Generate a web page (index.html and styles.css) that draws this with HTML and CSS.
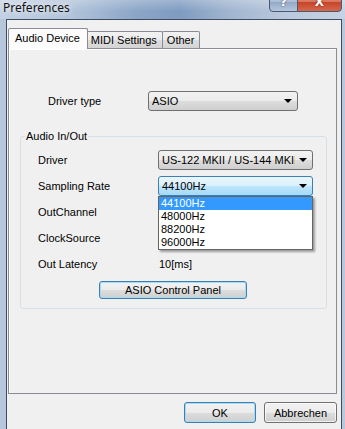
FILE: index.html
```html
<!DOCTYPE html>
<html>
<head>
<meta charset="utf-8">
<link rel="stylesheet" href="styles.css">
</head>
<body>
<div class="window">
  <div class="titlebar">
    <span class="title">Preferences</span>
    <div class="caption">
      <span class="cb help">?</span>
      <span class="cb close">X</span>
    </div>
  </div>
  <div class="client">
    <div class="tabs">
      <div class="tab active">Audio Device</div>
      <div class="tab">MIDI Settings</div>
      <div class="tab">Other</div>
    </div>
    <div class="pane">
      <div class="form-row top-row">
        <span class="label wide">Driver type</span>
        <div class="select w150"><span class="val">ASIO</span><span class="arrow"></span></div>
      </div>
      <fieldset class="group">
        <legend>Audio In/Out</legend>
        <div class="group-body">
          <div class="form-row">
            <span class="label">Driver</span>
            <div class="select w155"><span class="val">US-122 MKII / US-144 MKII</span><span class="arrow"></span></div>
          </div>
          <div class="form-row">
            <span class="label">Sampling Rate</span>
            <div class="select-wrap">
              <div class="select w155 focus"><span class="val">44100Hz</span><span class="arrow"></span></div>
              <ul class="dropdown">
                <li class="sel">44100Hz</li>
                <li>48000Hz</li>
                <li>88200Hz</li>
                <li>96000Hz</li>
              </ul>
            </div>
          </div>
          <div class="form-row"><span class="label">OutChannel</span></div>
          <div class="form-row"><span class="label">ClockSource</span></div>
          <div class="form-row"><span class="label">Out Latency</span><span class="value">10[ms]</span></div>
          <button class="btn default asio-btn">ASIO Control Panel</button>
        </div>
      </fieldset>
    </div>
    <div class="buttons">
      <button class="btn default ok">OK</button>
      <button class="btn cancel">Abbrechen</button>
    </div>
  </div>
</div>
</body>
</html>
```

FILE: styles.css
```css
* { box-sizing: border-box; }
html, body { margin: 0; padding: 0; }
body {
  width: 345px;
  height: 429px;
  overflow: hidden;
  font-family: "Liberation Sans", Arial, sans-serif;
  font-size: 11px;
  color: #000;
}
.window {
  width: 345px;
  height: 429px;
  display: flex;
  flex-direction: column;
  background: linear-gradient(90deg, #b7c8dd 0%, #a9bcd5 30%, #93abcb 50%, #a3b7d1 70%, #b8c8dd 100%);
}
.titlebar {
  height: 19px;
  flex: none;
  display: flex;
  justify-content: space-between;
  align-items: flex-start;
  padding: 0 3px 0 3px;
  background:
    linear-gradient(180deg, rgba(255,255,255,0.25), rgba(255,255,255,0) 60%),
    linear-gradient(90deg, #c3d1e3 0%, #b2c4da 20%, #8ba5c7 40%, #7f9bc0 52%, #9fb4cf 66%, #b9c8dc 82%, #c6d3e4 100%);
}
.title {
  font-family: "Noto Sans", "Open Sans", sans-serif;
  font-size: 12px;
  line-height: 15px;
  color: #111;
  text-shadow: 0 0 5px rgba(255,255,255,0.9), 0 0 8px rgba(255,255,255,0.6);
}
.caption {
  display: flex;
  margin-top: -8px;
}
.cb {
  height: 20px;
  display: flex;
  align-items: center;
  justify-content: center;
  color: #fff;
  font-family: "DejaVu Sans", sans-serif;
  font-weight: bold;
  font-size: 12px;
  border: 1px solid #4a5871;
}
.help {
  width: 29px;
  border-radius: 0 0 0 4px;
  background: linear-gradient(180deg, #c9d6e6, #aabcd4 50%, #93a9c6 51%, #b5c6dc);
  text-shadow: 0 0 2px #3a4a66;
}
.close {
  width: 45px;
  margin-left: -1px;
  border-radius: 0 0 4px 0;
  background: linear-gradient(180deg, #e8a493, #d7735b 50%, #c7432a 51%, #d4694c);
  text-shadow: 0 0 2px #6a1a0a;
}
.client {
  flex: 1;
  margin: 0 3px 0 6px;
  border: 1px solid #3f4d63;
  border-bottom: none;
  background: #f0f0f0;
  display: flex;
  flex-direction: column;
}
.tabs {
  height: 28px;
  flex: none;
  display: flex;
  align-items: flex-end;
  padding-left: 1px;
}
.tab {
  height: 17px;
  border: 1px solid #898c95;
  border-bottom: none;
  border-radius: 2px 2px 0 0;
  background: linear-gradient(180deg, #f2f2f2, #ebebeb 50%, #dddddd 51%, #d4d4d4);
  line-height: 16px;
  padding: 0 5px 0 4px;
  margin-left: -1px;
}
.tab.active {
  height: 21px;
  margin-left: 0;
  margin-right: -1px;
  margin-bottom: -1px;
  padding: 0 7px 0 6px;
  line-height: 18px;
  background: #fcfcfc;
  position: relative;
  z-index: 1;
}
.pane {
  margin-left: 1px;
  width: 329px;
  height: 346px;
  flex: none;
  border: 1px solid #898c95;
  background: #f0f0f0;
  box-shadow: inset 1px 1px 0 #fff;
}
.form-row {
  display: flex;
  align-items: center;
  height: 20px;
}
.top-row {
  margin-top: 42px;
  padding-left: 39px;
}
.label { width: 120px; flex: none; }
.label.wide { width: 100px; }
.value { padding-left: 1px; }
.select {
  height: 20px;
  display: flex;
  align-items: center;
  border: 1px solid #707070;
  border-radius: 3px;
  background: linear-gradient(180deg, #f2f2f2, #ebebeb 50%, #dddddd 51%, #cfcfcf);
  padding-left: 3px;
  padding-right: 5px;
}
.select.focus {
  border-color: #3c7fb1;
  background: linear-gradient(180deg, #eaf6fd, #d9f0fc 50%, #bee6fd 51%, #a7d9f5);
}
.w150 { width: 150px; }
.w155 { width: 155px; }
.val {
  flex: 1;
  white-space: nowrap;
  overflow: hidden;
}
.arrow {
  flex: none;
  width: 0;
  height: 0;
  margin-left: 4px;
  border-left: 4px solid transparent;
  border-right: 4px solid transparent;
  border-top: 4px solid #000;
}
.group {
  margin: 18px 0 0 11px;
  width: 307px;
  border: 1px solid #d5dfe5;
  border-radius: 3px;
  padding: 0 0 9px 4px;
  min-width: 0;
}
.group legend {
  padding: 0 1px;
  line-height: 14px;
}
.group-body {
  padding: 7px 0 0 13px;
  display: flex;
  flex-direction: column;
  gap: 6px;
}
.select-wrap { position: relative; }
.dropdown {
  position: absolute;
  left: 0;
  top: 100%;
  width: 155px;
  margin: 0;
  padding: 0;
  list-style: none;
  background: #fff;
  border: 1px solid #646464;
  box-shadow: 2px 2px 2px rgba(0,0,0,0.35);
  z-index: 5;
}
.dropdown li {
  height: 13px;
  line-height: 13px;
  padding-left: 2px;
}
.dropdown li.sel {
  background: #3399ff;
  color: #fff;
}
.btn {
  font-family: "Liberation Sans", Arial, sans-serif;
  font-size: 11px;
  color: #000;
  border: 1px solid #707070;
  border-radius: 3px;
  background: linear-gradient(180deg, #f2f2f2, #ebebeb 50%, #dddddd 51%, #cfcfcf);
  box-shadow: inset 0 0 0 1px rgba(255,255,255,0.7);
  padding: 0;
  height: 21px;
}
.btn.default {
  border-color: #3c7fb1;
  box-shadow: inset 0 0 0 1px #a6dbf6;
}
.asio-btn {
  margin-top: 1px;
  margin-left: 61px;
  width: 148px;
  height: 18px;
}
.buttons {
  display: flex;
  justify-content: flex-end;
  gap: 8px;
  margin-top: 8px;
  padding-right: 4px;
}
.ok { width: 72px; }
.cancel { width: 73px; }
```
